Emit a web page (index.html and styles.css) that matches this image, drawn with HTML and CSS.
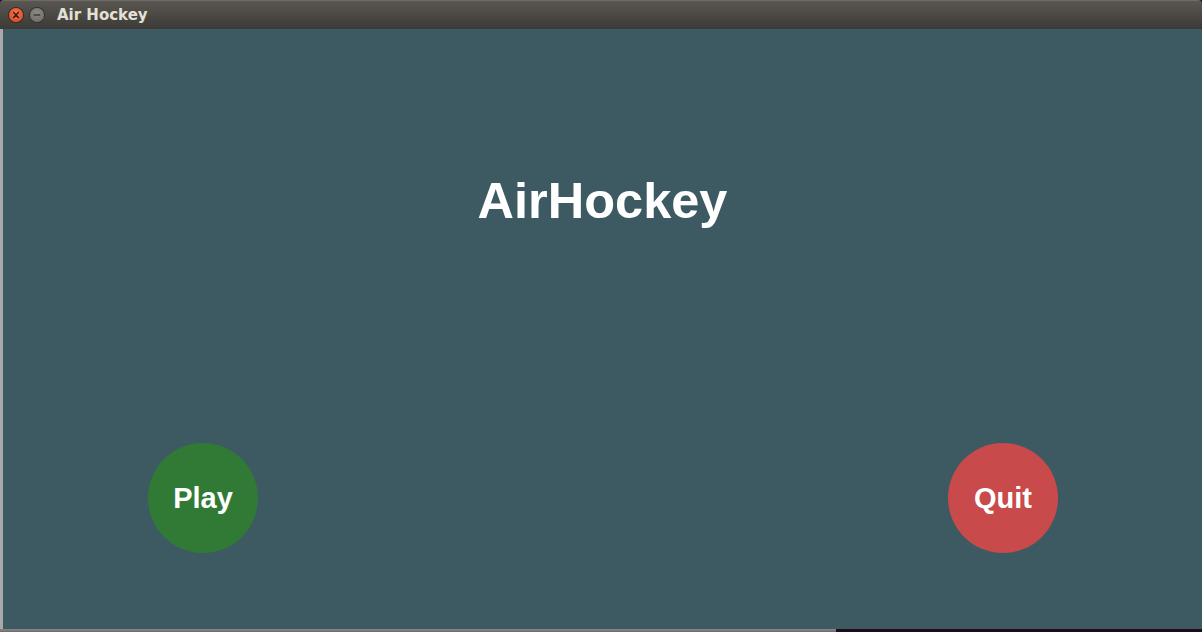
FILE: index.html
```html
<!DOCTYPE html>
<html>
<head>
<meta charset="utf-8">
<title>Air Hockey</title>
<link rel="stylesheet" href="styles.css">
</head>
<body>
<div class="screen">
  <div class="window">
    <div class="titlebar">
      <div class="controls">
        <span class="btn close">
          <svg width="14" height="14" viewBox="0 0 14 14"><path d="M4.6 4.6 L9.4 9.4 M9.4 4.6 L4.6 9.4" stroke="#3a1a10" stroke-width="1.4" stroke-linecap="round"/></svg>
        </span>
        <span class="btn min">
          <svg width="14" height="14" viewBox="0 0 14 14"><path d="M4.2 7 L9.8 7" stroke="#3c3b38" stroke-width="1.4" stroke-linecap="round"/></svg>
        </span>
      </div>
      <span class="wtitle">Air Hockey</span>
    </div>
    <div class="body">
      <div class="edge"></div>
      <main class="game">
        <h1 class="logo">AirHockey</h1>
        <div class="buttons">
          <button class="round play">Play</button>
          <button class="round quit">Quit</button>
        </div>
      </main>
    </div>
    <div class="bottom">
      <div class="shadow"></div>
      <div class="desk"></div>
    </div>
  </div>
</div>
</body>
</html>
```

FILE: styles.css
```css
html, body {
  margin: 0;
  padding: 0;
  width: 1202px;
  height: 632px;
  overflow: hidden;
  background: #1b0c1f;
}
.screen {
  width: 1202px;
  height: 632px;
}
.window {
  display: flex;
  flex-direction: column;
  height: 632px;
}
.titlebar {
  height: 29px;
  display: flex;
  align-items: center;
  background: linear-gradient(#5a5752, #3c3a36);
  border-top: 1px solid #6e6b65;
  box-sizing: border-box;
  border-radius: 4px 4px 0 0;
}
.controls {
  display: flex;
  gap: 7px;
  padding-left: 9px;
}
.btn {
  width: 14px;
  height: 14px;
  border-radius: 50%;
  display: block;
}
.btn svg { display: block; }
.close {
  background: radial-gradient(circle at 50% 35%, #f0714a, #d9481f);
  box-shadow: 0 0 0 1px #3a2a22;
}
.min {
  background: radial-gradient(circle at 50% 35%, #8c8a85, #6b6964);
  box-shadow: 0 0 0 1px #35332f;
}
.wtitle {
  margin-left: 13px;
  font-family: "DejaVu Sans", sans-serif;
  font-weight: bold;
  font-size: 15px;
  color: #e4e0d8;
}
.body {
  display: flex;
  height: 600px;
}
.edge {
  width: 3px;
  background: #a9a9a9;
}
.game {
  flex: 1;
  background: #3d5a63;
  display: flex;
  flex-direction: column;
  align-items: center;
}
.logo {
  margin: 144px 0 0 0;
  font-family: "Liberation Sans", Arial, sans-serif;
  font-weight: bold;
  font-size: 50.5px;
  line-height: 56px;
  color: #ffffff;
}
.buttons {
  margin-top: 214px;
  width: 100%;
  display: flex;
  padding-left: 145px;
  box-sizing: border-box;
  gap: 690px;
}
.round {
  width: 110px;
  height: 110px;
  border-radius: 50%;
  border: none;
  padding: 0;
  font-family: "Liberation Sans", Arial, sans-serif;
  font-weight: bold;
  font-size: 29px;
  color: #ffffff;
}
.play { background: #317a36; }
.quit { background: #c94a4a; }
.bottom {
  display: flex;
  height: 3px;
}
.shadow {
  width: 836px;
  background: linear-gradient(#8a8a8a, #6a6a6a);
}
.desk {
  flex: 1;
  background: #1b0c1f;
}
```
